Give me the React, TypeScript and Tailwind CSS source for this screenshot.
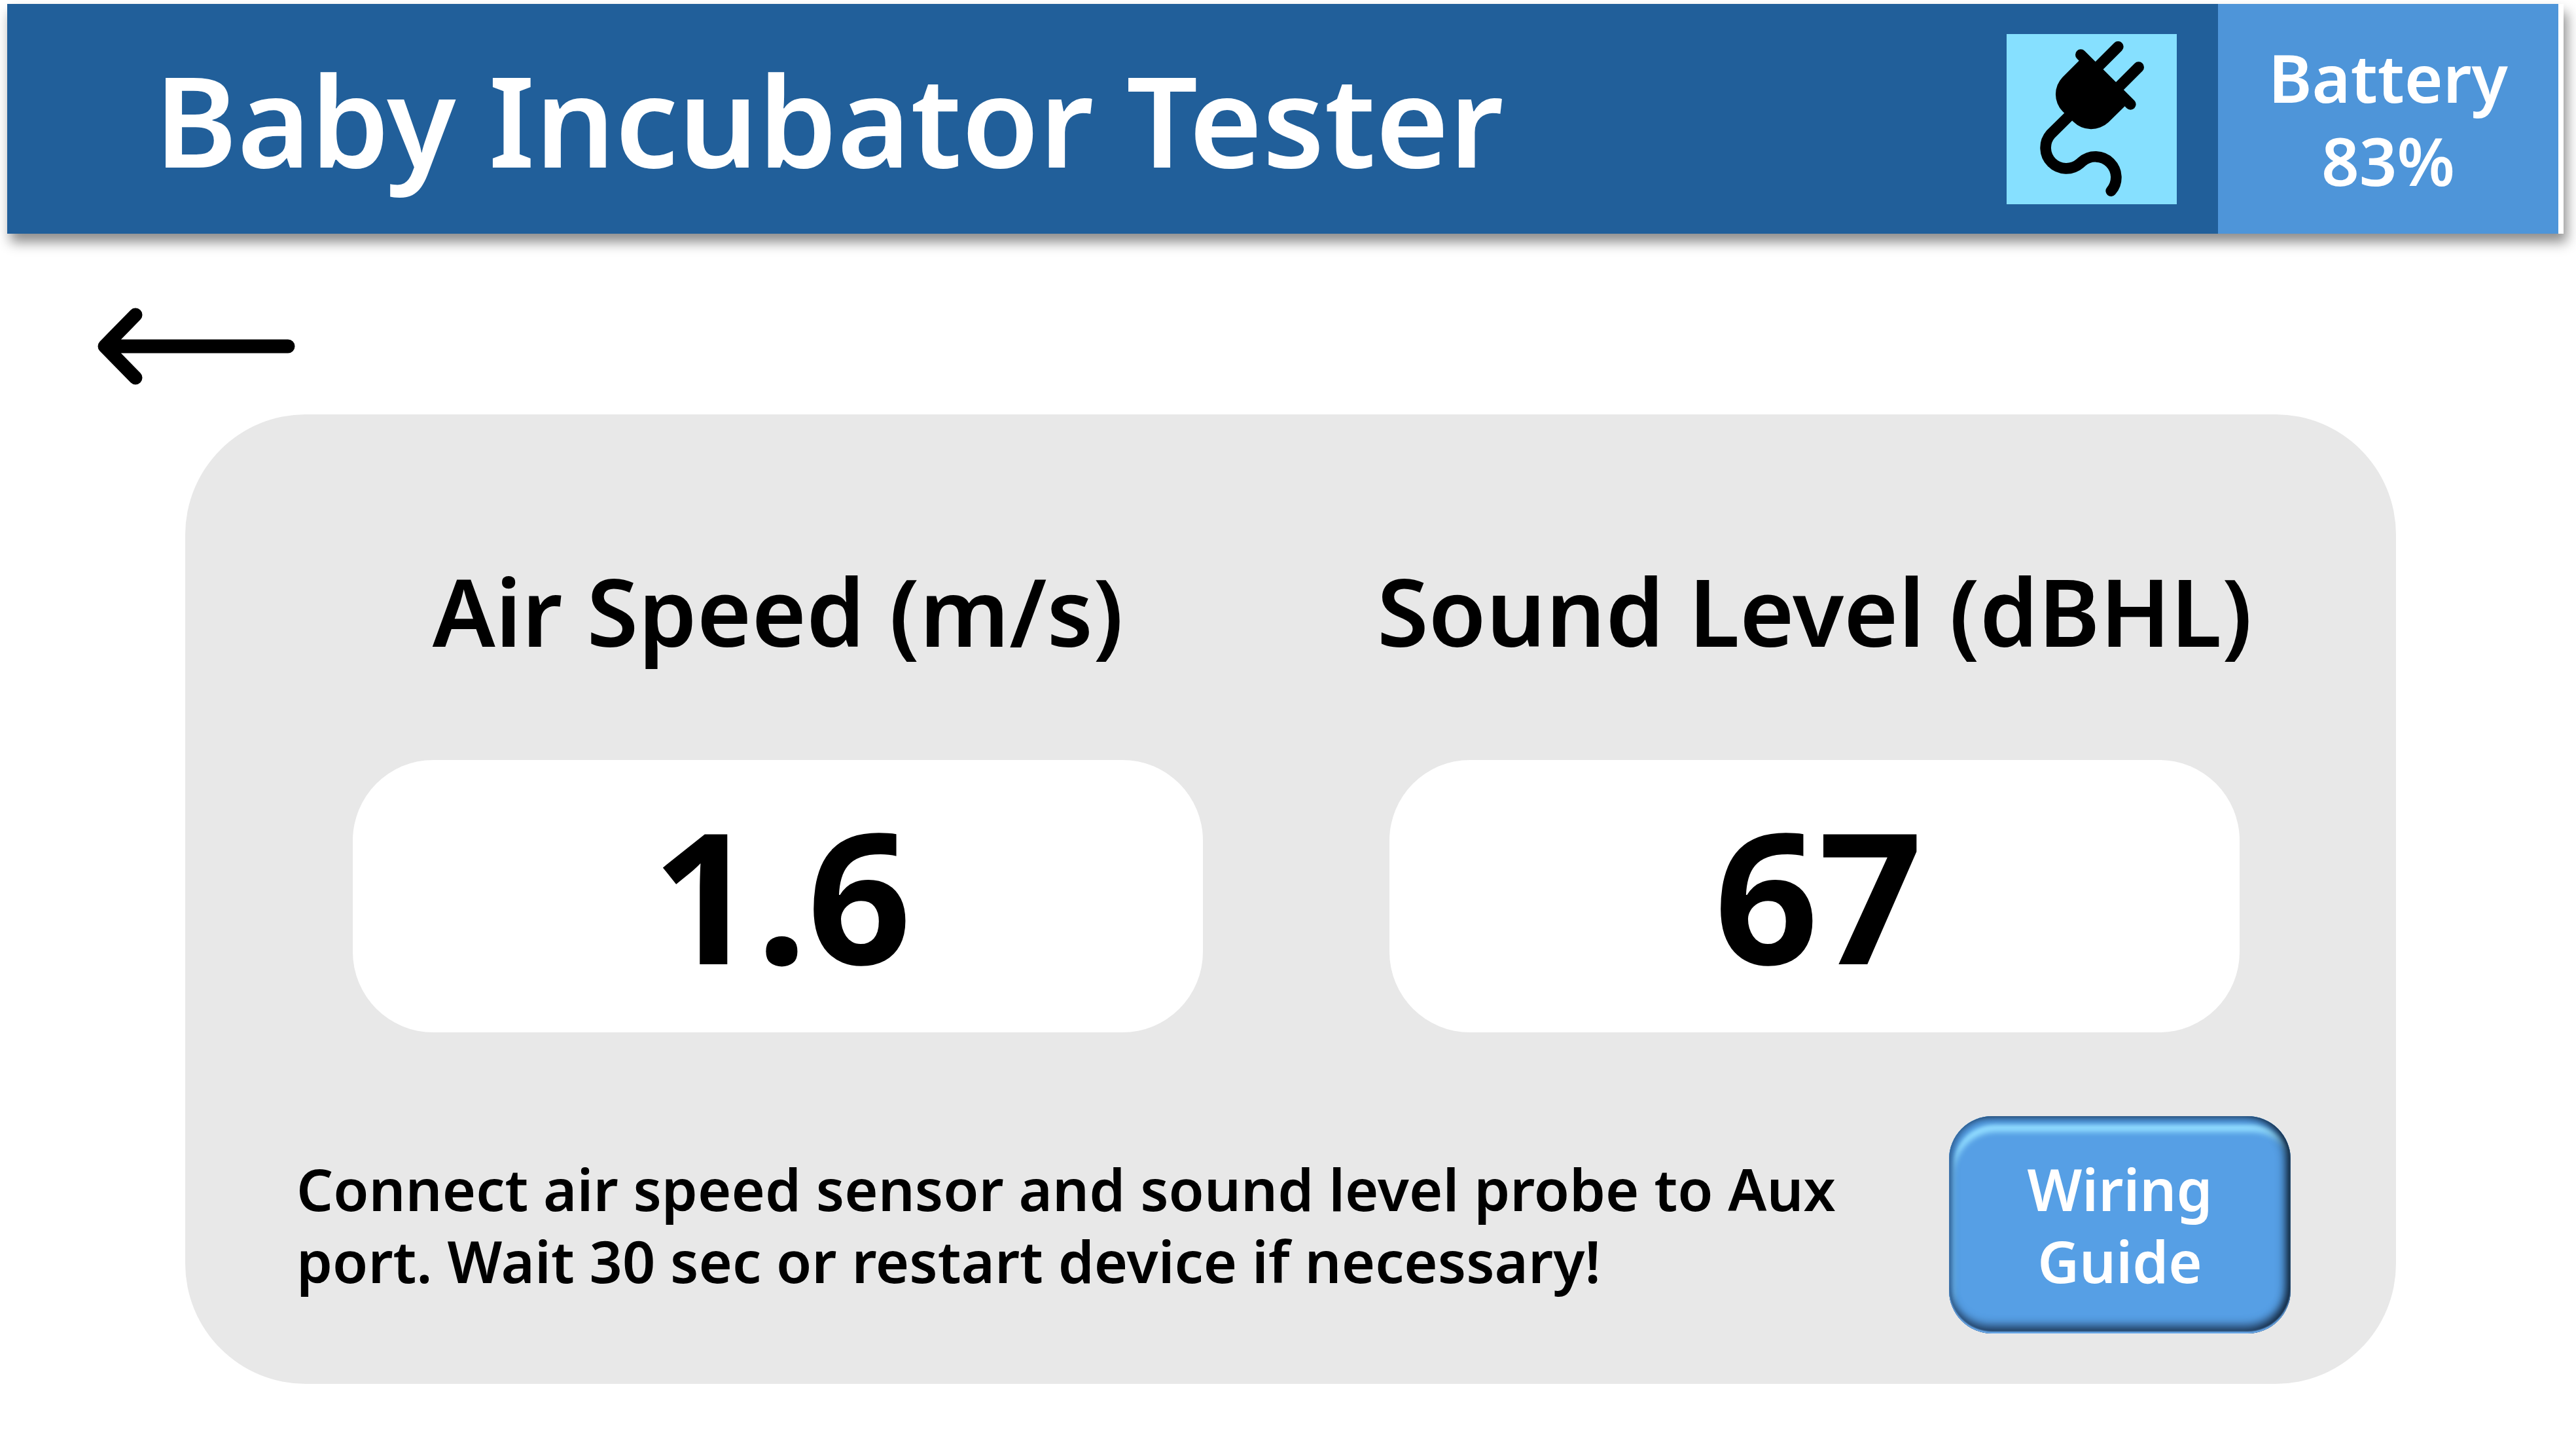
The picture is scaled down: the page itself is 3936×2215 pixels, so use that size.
type Reading = { id: string; label: string; value: string };

const readings: Reading[] = [
  { id: "air-speed", label: "Air Speed (m/s)", value: "1.6" },
  { id: "sound-level", label: "Sound Level (dBHL)", value: "67" },
];

function PlugIcon() {
  return (
    <svg viewBox="78 66 780 780" className="size-full" role="img" aria-label="Plugged in">
      <path d="M410 188 L335 263 A113 113 0 0 0 335 421 L384 468 A116 116 0 0 0 545 470 L620 397 L440 190 Z" />
      <g fill="none" stroke="#000" strokeWidth="50" strokeLinecap="round">
        <path d="M418 161 L646 388" />
        <path d="M589 124 L490 223" />
        <path d="M683 218 L584 317" />
        <path d="M370 436 L280 525 A95 95 0 0 0 414 659 L423 651 A95 95 0 0 1 557 785" />
      </g>
    </svg>
  );
}

function BackArrow() {
  return (
    <svg viewBox="0 0 302 118" className="h-[118px] w-[302px]" aria-hidden="true">
      <path
        d="M58 11 L11 59 L58 107 M17 59 H291"
        fill="none"
        stroke="#000"
        strokeWidth="21"
        strokeLinecap="round"
        strokeLinejoin="round"
      />
    </svg>
  );
}

function Header() {
  return (
    <header className="mr-[19px] ml-[11px] flex h-[351px] items-stretch bg-white pr-2 shadow-[5px_13px_18px_rgba(0,0,0,0.45)]">
      <div className="flex flex-1 items-center justify-between bg-[#215f9a] pr-[63px] pl-[225px]">
        <h1 className="text-[192px] leading-none text-white">Baby Incubator Tester</h1>
        <div className="size-[260px] bg-[#86e0ff]">
          <PlugIcon />
        </div>
      </div>
      <div className="flex w-[520px] flex-col justify-center bg-[#4e95d9] text-center text-[101px] leading-[127px] text-white">
        <p>Battery</p>
        <p>83%</p>
      </div>
    </header>
  );
}

function ReadingCard({ id, label, value }: Reading) {
  return (
    <section aria-labelledby={id}>
      <h2 id={id} className="-mx-8 text-center text-[143px] leading-[200px] whitespace-nowrap">
        {label}
      </h2>
      <div className="mt-32 flex h-[416px] items-center justify-center rounded-[123px] bg-white pb-2 pl-3">
        <output className="text-[278px] leading-none font-bold">{value}</output>
      </div>
    </section>
  );
}

export default function App() {
  return (
    <div className="min-h-screen bg-white pt-1.5 pb-[100px] font-['Noto_Sans',sans-serif] font-semibold text-black">
      <Header />
      <button type="button" aria-label="Back" className="mt-[113px] ml-[149px] block">
        <BackArrow />
      </button>
      <main className="mt-[45px] mr-[275px] ml-[283px] rounded-[184px] bg-[#e8e8e8] pt-[200px] pb-[77px]">
        <div className="grid grid-cols-2 gap-x-[285px] pr-[239px] pl-64">
          {readings.map((r) => (
            <ReadingCard key={r.id} {...r} />
          ))}
        </div>
        <div className="mt-32 flex items-center justify-between gap-24 pr-[161px] pl-[170px]">
          <p className="text-[88px] leading-[110px]">
            Connect air speed sensor and sound level probe to Aux port. Wait 30 sec or restart device if
            necessary!
          </p>
          <button
            type="button"
            className="h-[332px] w-[522px] shrink-0 rounded-[66px] bg-[#569fe5] px-24 text-[88px] leading-[110px] text-white shadow-[inset_0_-3px_2px_#6aa9ea,inset_-8px_0_16px_-2px_#0b1c2e,inset_-3px_-15px_14px_-2px_#2b4d74,inset_6px_0_12px_-1px_#3a70a8,inset_0_5px_8px_-2px_#4784c4,inset_5px_13px_6px_#569fe5,inset_7px_24px_8px_#93deff]"
          >
            Wiring Guide
          </button>
        </div>
      </main>
    </div>
  );
}
